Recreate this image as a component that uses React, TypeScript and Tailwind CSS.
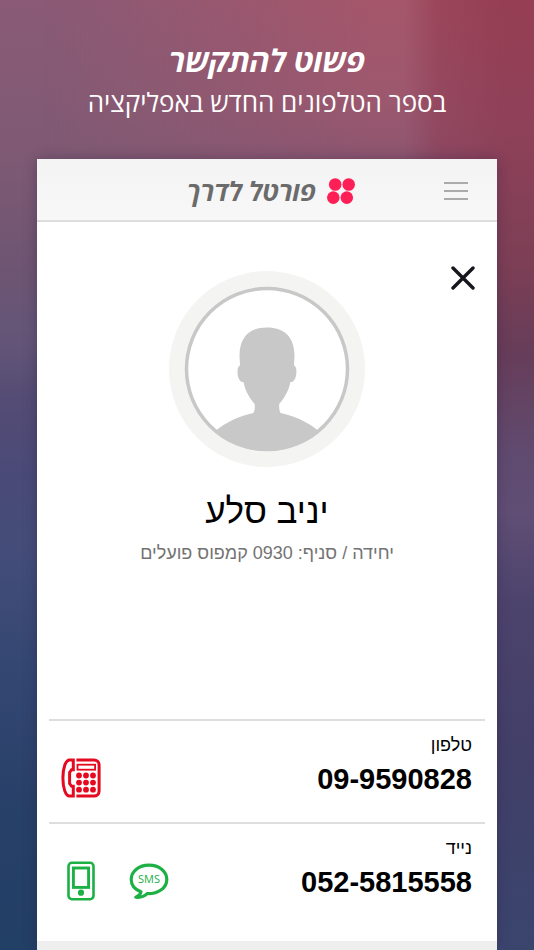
import type { ReactNode } from 'react'

const contacts = [
  { label: 'טלפון', number: '09-9590828', kind: 'desk' },
  { label: 'נייד', number: '052-5815558', kind: 'mobile' },
]

function DeskPhoneIcon() {
  return (
    <svg className="w-10 h-10" viewBox="0 0 40 40" fill="none" stroke="#e50a20" strokeWidth="3">
      <path d="M12.300 1.900H8.500C4.600 1.900 1.900 10 1.900 20s2.700 18.100 6.600 18.100h3.800V28.300H10.600L8.600 25.500V14.500L10.600 11.700h1.700z" />
      <path d="M15.400 1.900H33a5.100 5.100 0 0 1 5.100 5.100v26a5.100 5.100 0 0 1-5.100 5.100H15.400" />
      <rect x="16.500" y="6.700" width="17.600" height="5" strokeWidth="1.800" />
      <g fill="#e50a20" stroke="none">
        {[17.5, 24.6, 31.7].map((y) =>
          [18, 25, 32].map((x) => <circle key={`${x}-${y}`} cx={x} cy={y} r="2.9" />)
        )}
      </g>
    </svg>
  )
}

function MobileIcon() {
  return (
    <svg className="w-10 h-10" viewBox="0 0 40 40" fill="none" stroke="#1cb045">
      <rect x="7.500" y="1.800" width="25" height="36.400" rx="3.400" strokeWidth="2.600" />
      <rect x="12.400" y="7" width="15.200" height="19.400" strokeWidth="2.900" />
      <circle cx="20" cy="31.700" r="3.100" fill="#1cb045" stroke="none" />
    </svg>
  )
}

function SmsIcon() {
  return (
    <svg className="w-10 h-10" viewBox="0 0 40 40">
      <path
        d="M20 4.200C10 4.200 2.200 10.300 2.200 18.500c0 5.400 3.600 10 9.800 12.300-.6 2.600-2.500 4.300-5.200 5.400 4.700.6 8.500-.7 11.300-3.500 11.600.3 19.700-6 19.700-14.200S30 4.200 20 4.200z"
        fill="none"
        stroke="#1cb045"
        strokeWidth="3.200"
        strokeLinejoin="round"
      />
      <text x="20" y="22.300" textAnchor="middle" fontSize="11" fontFamily="Open Sans, sans-serif" fill="#1cb045" direction="ltr">SMS</text>
    </svg>
  )
}

function IconButton({ label, children }: { label: string; children: ReactNode }) {
  return (
    <button type="button" aria-label={label} className="block cursor-pointer">
      {children}
    </button>
  )
}

function Avatar() {
  return (
    <svg className="w-49 h-49" viewBox="0 0 196 196">
      <defs>
        <clipPath id="face">
          <circle cx="98" cy="98" r="82" />
        </clipPath>
      </defs>
      <circle cx="98" cy="98" r="98" fill="#f4f4f2" />
      <circle cx="98" cy="98" r="80.500" fill="#fff" stroke="#c8c8c8" strokeWidth="3.500" />
      <path
        clipPath="url(#face)"
        fill="#c8c8c8"
        d="M98 56.500c-17 0-27.500 9-27.500 28.500L71 94.500c-2.500 1-2.800 5-2.300 9 .5 4.500 2.800 8 5.800 7.500 1.500 8 5.500 15.500 11.200 22 .3 3.500.2 6-1.200 9-14 3-26.500 8.500-38 18v30h103v-30c-11.500-9.500-24-15-38-18-1.400-3-1.500-5.500-1.300-9 5.700-6.500 9.700-14 11.200-22 3 .5 5.300-3 5.800-7.500.5-4 .3-8-2.200-9l.5-9.500c0-19.500-10.500-28.500-27.500-28.500z"
      />
    </svg>
  )
}

// Blurred photo backdrop: one vertical ramp per side, blended across the page
function Backdrop() {
  return (
    <div className="absolute inset-0 -z-10 overflow-hidden bg-[linear-gradient(to_bottom,#8a5a76_0%,#7f5a74_16%,#6e5572_28%,#635578_36%,#544c74_42%,#4a4a78_50%,#444d79_58%,#344772_70%,#274068_86%,#223f66_100%)]">
      <div className="absolute inset-0 bg-[linear-gradient(to_bottom,#a5566a_0%,#9d586e_10%,#8a5570_18%,#6f5070_40%)] mask-[linear-gradient(to_right,transparent_8%,black_70%)]"></div>
      <div className="absolute inset-0 bg-[linear-gradient(to_bottom,#963e53_0%,#8e4159_14%,#7c3f55_28%,#673d59_37%,#604b70_48%,#604e75_54%,#4d446d_63%,#423f68_79%,#3a456e_100%)] mask-[linear-gradient(to_right,transparent_76%,#000a_82%,black_95%)]"></div>
    </div>
  )
}

export default function App() {
  return (
    <div dir="rtl" className="relative isolate min-h-screen flex flex-col px-[37px] font-['Liberation_Sans',sans-serif]">
      <Backdrop />

      {/* Headline */}
      <div className="h-[159px] pt-10 text-center text-white font-['Open_Sans',sans-serif]">
        <h1 className="text-[31px] leading-10 font-bold italic">פשוט להתקשר</h1>
        <p className="text-[26px] leading-11">בספר הטלפונים החדש באפליקציה</p>
      </div>

      {/* App panel */}
      <main className="flex-1 flex flex-col bg-white shadow-[0_0_12px_rgba(40,30,60,0.35)]">
        <header className="h-[63px] pt-[2px] pr-[29px] pl-[37px] grid grid-cols-[1fr_auto_1fr] items-center bg-gradient-to-b from-[#f3f3f3] to-[#f8f8f8] border-b-2 border-[#dddddd]">
          <button type="button" aria-label="תפריט" className="w-6 flex flex-col gap-[6px] cursor-pointer">
            <span className="w-full h-[2px] bg-[#ababab]"></span>
            <span className="w-full h-[2px] bg-[#ababab]"></span>
            <span className="w-full h-[2px] bg-[#ababab]"></span>
          </button>
          <div className="flex items-center gap-[11px]">
            <svg className="w-7 h-[26px]" viewBox="0 0 28 26" fill="#ff1f57">
              <circle cx="8.200" cy="6.500" r="6.300" />
              <circle cx="21.700" cy="6.500" r="6.300" />
              <circle cx="6.300" cy="19.600" r="6.300" />
              <circle cx="19.800" cy="19.600" r="6.300" />
            </svg>
            <span className="text-[26px] leading-10 font-bold italic text-[#6b6b6b] font-['Open_Sans',sans-serif]">פורטל לדרך</span>
          </div>
        </header>

        {/* Profile */}
        <section className="relative h-[497px] pt-[49px] flex flex-col items-center">
          <button type="button" aria-label="סגירה" className="absolute top-11 right-[22px] cursor-pointer">
            <svg className="w-6 h-6" viewBox="0 0 24 24" stroke="#15171c" strokeWidth="3.400" strokeLinecap="round">
              <path d="M2 2l20 20M22 2l-20 20" />
            </svg>
          </button>
          <Avatar />
          <h2 className="mt-6 text-[35px] leading-10 text-black">יניב סלע</h2>
          <p className="mt-2 text-[18px] leading-7 text-[#737373]">יחידה / סניף: 0930 קמפוס פועלים</p>
        </section>

        {/* Phone numbers */}
        <ul className="px-3">
          {contacts.map((contact) => (
            <li key={contact.number} className="h-[103px] pl-3 pr-[13px] pt-3 flex items-start justify-between border-t-2 border-[#dedede]">
              <div>
                <div className="text-[18px] leading-6 text-black">{contact.label}</div>
                <a href={`tel:${contact.number}`} dir="ltr" className="block text-[29px] leading-11 font-bold text-black">
                  {contact.number}
                </a>
              </div>
              <div className="pt-[25px] flex gap-7">
                {contact.kind === 'desk' ? (
                  <IconButton label="חיוג לטלפון"><DeskPhoneIcon /></IconButton>
                ) : (
                  <>
                    <IconButton label="שליחת הודעה"><SmsIcon /></IconButton>
                    <IconButton label="חיוג לנייד"><MobileIcon /></IconButton>
                  </>
                )}
              </div>
            </li>
          ))}
        </ul>
        <div className="mt-4 flex-1 bg-[#eeeeef]"></div>
      </main>
    </div>
  )
}
